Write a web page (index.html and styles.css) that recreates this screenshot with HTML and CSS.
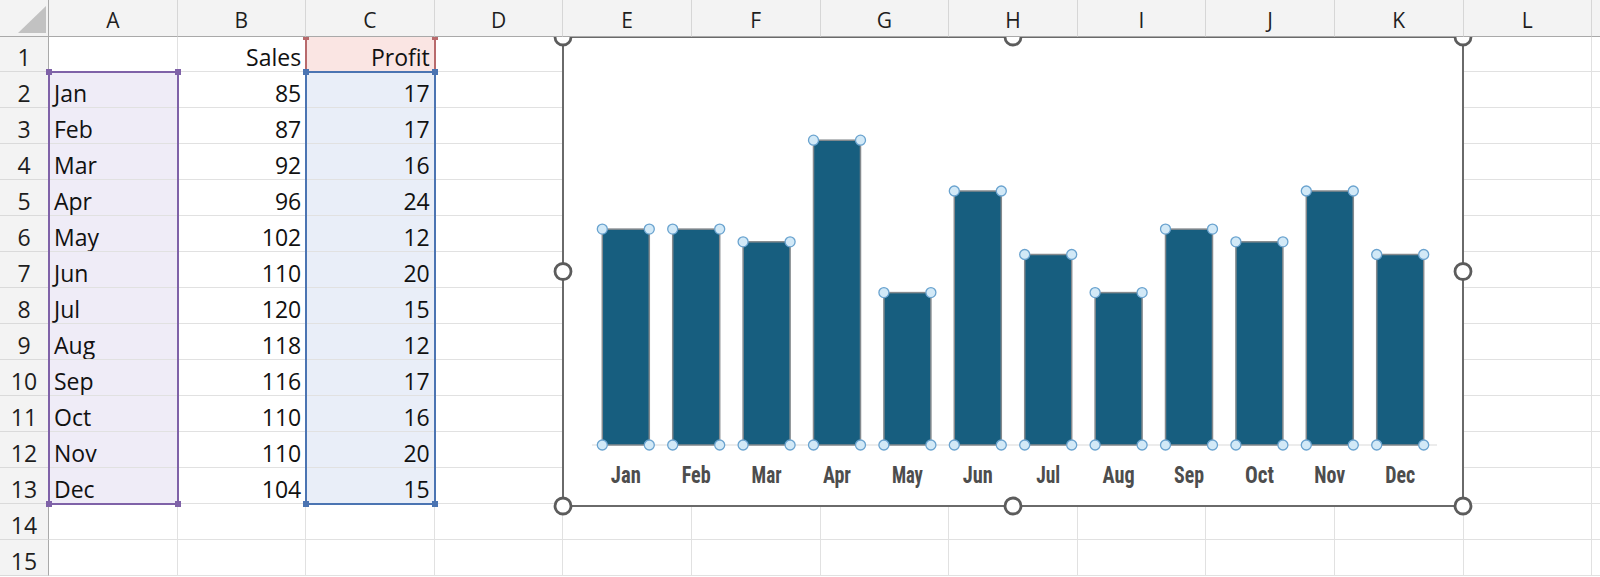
FILE: index.html
```html
<!DOCTYPE html>
<html>
<head>
<meta charset="utf-8">
<link rel="stylesheet" href="styles.css">
</head>
<body>
<div class="wrap">
  <div class="grid cells">
    <div class="ch corner"><div class="tri"></div></div><div class="ch">A</div><div class="ch">B</div><div class="ch">C</div><div class="ch">D</div><div class="ch">E</div><div class="ch">F</div><div class="ch">G</div><div class="ch">H</div><div class="ch">I</div><div class="ch">J</div><div class="ch">K</div><div class="ch">L</div><div class="ch"></div>

    <div class="rh">1</div><div class="c"></div><div class="c r">Sales</div><div class="c r sc1">Profit</div><div class="c"></div><div class="c"></div><div class="c"></div><div class="c"></div><div class="c"></div><div class="c"></div><div class="c"></div><div class="c"></div><div class="c"></div><div class="c"></div>
    <div class="rh">2</div><div class="c sa">Jan</div><div class="c r">85</div><div class="c r sc">17</div><div class="c"></div><div class="c"></div><div class="c"></div><div class="c"></div><div class="c"></div><div class="c"></div><div class="c"></div><div class="c"></div><div class="c"></div><div class="c"></div>
    <div class="rh">3</div><div class="c sa">Feb</div><div class="c r">87</div><div class="c r sc">17</div><div class="c"></div><div class="c"></div><div class="c"></div><div class="c"></div><div class="c"></div><div class="c"></div><div class="c"></div><div class="c"></div><div class="c"></div><div class="c"></div>
    <div class="rh">4</div><div class="c sa">Mar</div><div class="c r">92</div><div class="c r sc">16</div><div class="c"></div><div class="c"></div><div class="c"></div><div class="c"></div><div class="c"></div><div class="c"></div><div class="c"></div><div class="c"></div><div class="c"></div><div class="c"></div>
    <div class="rh">5</div><div class="c sa">Apr</div><div class="c r">96</div><div class="c r sc">24</div><div class="c"></div><div class="c"></div><div class="c"></div><div class="c"></div><div class="c"></div><div class="c"></div><div class="c"></div><div class="c"></div><div class="c"></div><div class="c"></div>
    <div class="rh">6</div><div class="c sa">May</div><div class="c r">102</div><div class="c r sc">12</div><div class="c"></div><div class="c"></div><div class="c"></div><div class="c"></div><div class="c"></div><div class="c"></div><div class="c"></div><div class="c"></div><div class="c"></div><div class="c"></div>
    <div class="rh">7</div><div class="c sa">Jun</div><div class="c r">110</div><div class="c r sc">20</div><div class="c"></div><div class="c"></div><div class="c"></div><div class="c"></div><div class="c"></div><div class="c"></div><div class="c"></div><div class="c"></div><div class="c"></div><div class="c"></div>
    <div class="rh">8</div><div class="c sa">Jul</div><div class="c r">120</div><div class="c r sc">15</div><div class="c"></div><div class="c"></div><div class="c"></div><div class="c"></div><div class="c"></div><div class="c"></div><div class="c"></div><div class="c"></div><div class="c"></div><div class="c"></div>
    <div class="rh">9</div><div class="c sa">Aug</div><div class="c r">118</div><div class="c r sc">12</div><div class="c"></div><div class="c"></div><div class="c"></div><div class="c"></div><div class="c"></div><div class="c"></div><div class="c"></div><div class="c"></div><div class="c"></div><div class="c"></div>
    <div class="rh">10</div><div class="c sa">Sep</div><div class="c r">116</div><div class="c r sc">17</div><div class="c"></div><div class="c"></div><div class="c"></div><div class="c"></div><div class="c"></div><div class="c"></div><div class="c"></div><div class="c"></div><div class="c"></div><div class="c"></div>
    <div class="rh">11</div><div class="c sa">Oct</div><div class="c r">110</div><div class="c r sc">16</div><div class="c"></div><div class="c"></div><div class="c"></div><div class="c"></div><div class="c"></div><div class="c"></div><div class="c"></div><div class="c"></div><div class="c"></div><div class="c"></div>
    <div class="rh">12</div><div class="c sa">Nov</div><div class="c r">110</div><div class="c r sc">20</div><div class="c"></div><div class="c"></div><div class="c"></div><div class="c"></div><div class="c"></div><div class="c"></div><div class="c"></div><div class="c"></div><div class="c"></div><div class="c"></div>
    <div class="rh">13</div><div class="c sa">Dec</div><div class="c r">104</div><div class="c r sc">15</div><div class="c"></div><div class="c"></div><div class="c"></div><div class="c"></div><div class="c"></div><div class="c"></div><div class="c"></div><div class="c"></div><div class="c"></div><div class="c"></div>
    <div class="rh">14</div><div class="c"></div><div class="c"></div><div class="c"></div><div class="c"></div><div class="c"></div><div class="c"></div><div class="c"></div><div class="c"></div><div class="c"></div><div class="c"></div><div class="c"></div><div class="c"></div><div class="c"></div>
    <div class="rh">15</div><div class="c"></div><div class="c"></div><div class="c"></div><div class="c"></div><div class="c"></div><div class="c"></div><div class="c"></div><div class="c"></div><div class="c"></div><div class="c"></div><div class="c"></div><div class="c"></div><div class="c"></div>
  </div>

  <div class="grid overlay">
    <div class="sel selA"><span class="h tl"></span><span class="h tr"></span><span class="h bl"></span><span class="h br"></span></div>
    <div class="sel selC1"><span class="t tl"></span><span class="t tr"></span></div>
    <div class="sel selC"><span class="h tl"></span><span class="h tr"></span><span class="h bl"></span><span class="h br"></span></div>
    <div class="chart">
      <svg width="900" height="469" viewBox="0 0 900 469">
        <rect x="0" y="0" width="900" height="469" fill="#ffffff" stroke="#6a6a6a" stroke-width="2"/>
        <line x1="29" y1="408" x2="874" y2="408" stroke="#d9d9d9" stroke-width="1"/>
        <g class="bars">
          <rect x="39.3" y="192.1" width="47" height="215.9"/>
          <rect x="109.7" y="192.1" width="47" height="215.9"/>
          <rect x="180.1" y="204.8" width="47" height="203.2"/>
          <rect x="250.5" y="103.2" width="47" height="304.8"/>
          <rect x="320.9" y="255.6" width="47" height="152.4"/>
          <rect x="391.3" y="154" width="47" height="254"/>
          <rect x="461.7" y="217.5" width="47" height="190.5"/>
          <rect x="532.1" y="255.6" width="47" height="152.4"/>
          <rect x="602.5" y="192.1" width="47" height="215.9"/>
          <rect x="672.9" y="204.8" width="47" height="203.2"/>
          <rect x="743.3" y="154" width="47" height="254"/>
          <rect x="813.7" y="217.5" width="47" height="190.5"/>
        </g>
        <g class="pts">
          <circle cx="39.3" cy="192.1" r="5"/><circle cx="86.3" cy="192.1" r="5"/><circle cx="39.3" cy="408" r="5"/><circle cx="86.3" cy="408" r="5"/>
          <circle cx="109.7" cy="192.1" r="5"/><circle cx="156.7" cy="192.1" r="5"/><circle cx="109.7" cy="408" r="5"/><circle cx="156.7" cy="408" r="5"/>
          <circle cx="180.1" cy="204.8" r="5"/><circle cx="227.1" cy="204.8" r="5"/><circle cx="180.1" cy="408" r="5"/><circle cx="227.1" cy="408" r="5"/>
          <circle cx="250.5" cy="103.2" r="5"/><circle cx="297.5" cy="103.2" r="5"/><circle cx="250.5" cy="408" r="5"/><circle cx="297.5" cy="408" r="5"/>
          <circle cx="320.9" cy="255.6" r="5"/><circle cx="367.9" cy="255.6" r="5"/><circle cx="320.9" cy="408" r="5"/><circle cx="367.9" cy="408" r="5"/>
          <circle cx="391.3" cy="154" r="5"/><circle cx="438.3" cy="154" r="5"/><circle cx="391.3" cy="408" r="5"/><circle cx="438.3" cy="408" r="5"/>
          <circle cx="461.7" cy="217.5" r="5"/><circle cx="508.7" cy="217.5" r="5"/><circle cx="461.7" cy="408" r="5"/><circle cx="508.7" cy="408" r="5"/>
          <circle cx="532.1" cy="255.6" r="5"/><circle cx="579.1" cy="255.6" r="5"/><circle cx="532.1" cy="408" r="5"/><circle cx="579.1" cy="408" r="5"/>
          <circle cx="602.5" cy="192.1" r="5"/><circle cx="649.5" cy="192.1" r="5"/><circle cx="602.5" cy="408" r="5"/><circle cx="649.5" cy="408" r="5"/>
          <circle cx="672.9" cy="204.8" r="5"/><circle cx="719.9" cy="204.8" r="5"/><circle cx="672.9" cy="408" r="5"/><circle cx="719.9" cy="408" r="5"/>
          <circle cx="743.3" cy="154" r="5"/><circle cx="790.3" cy="154" r="5"/><circle cx="743.3" cy="408" r="5"/><circle cx="790.3" cy="408" r="5"/>
          <circle cx="813.7" cy="217.5" r="5"/><circle cx="860.7" cy="217.5" r="5"/><circle cx="813.7" cy="408" r="5"/><circle cx="860.7" cy="408" r="5"/>
        </g>
        <g class="cats">
          <text x="62.8" y="446" textLength="30" lengthAdjust="spacingAndGlyphs">Jan</text>
          <text x="133.2" y="446" textLength="29" lengthAdjust="spacingAndGlyphs">Feb</text>
          <text x="203.6" y="446" textLength="30" lengthAdjust="spacingAndGlyphs">Mar</text>
          <text x="274" y="446" textLength="28" lengthAdjust="spacingAndGlyphs">Apr</text>
          <text x="344.4" y="446" textLength="31" lengthAdjust="spacingAndGlyphs">May</text>
          <text x="414.8" y="446" textLength="30" lengthAdjust="spacingAndGlyphs">Jun</text>
          <text x="485.2" y="446" textLength="24" lengthAdjust="spacingAndGlyphs">Jul</text>
          <text x="555.6" y="446" textLength="32" lengthAdjust="spacingAndGlyphs">Aug</text>
          <text x="626" y="446" textLength="30" lengthAdjust="spacingAndGlyphs">Sep</text>
          <text x="696.4" y="446" textLength="29" lengthAdjust="spacingAndGlyphs">Oct</text>
          <text x="766.8" y="446" textLength="31" lengthAdjust="spacingAndGlyphs">Nov</text>
          <text x="837.2" y="446" textLength="30" lengthAdjust="spacingAndGlyphs">Dec</text>
        </g>
        <g class="frame-h">
          <circle cx="0" cy="0" r="8"/><circle cx="450" cy="0" r="8"/><circle cx="900" cy="0" r="8"/>
          <circle cx="0" cy="234.5" r="8"/><circle cx="900" cy="234.5" r="8"/>
          <circle cx="0" cy="469" r="8"/><circle cx="450" cy="469" r="8"/><circle cx="900" cy="469" r="8"/>
        </g>
      </svg>
    </div>
  </div>
</div>
</body>
</html>
```

FILE: styles.css
```css
* { box-sizing: border-box; }
html, body { margin: 0; padding: 0; background: #ffffff; }
body {
  width: 1600px;
  height: 577px;
  overflow: hidden;
  font-family: "Open Sans", "Noto Sans", sans-serif;
}
.wrap { position: relative; width: 1600px; height: 577px; }
.grid {
  display: grid;
  grid-template-columns: 49px repeat(12, 128.6px) 1fr;
  grid-template-rows: 37px 35px repeat(14, 36px);
}

/* column headers */
.ch {
  position: relative;
  z-index: 3;
  background: #f3f3f3;
  border-right: 1px solid #d6d6d6;
  border-bottom: 1px solid #a9a9a9;
  display: flex;
  align-items: center;
  justify-content: center;
  padding-top: 4px;
  font-size: 21px;
  color: #1e1e1e;
}
.corner {
  border-right: 1px solid #a9a9a9;
  justify-content: flex-end;
  align-items: flex-end;
  padding: 0 2px 3px 0;
}
.tri {
  width: 28px;
  height: 27px;
  background: #c2c2c2;
  clip-path: polygon(100% 0, 100% 100%, 0 100%);
}

/* row headers */
.rh {
  background: #f3f3f3;
  border-right: 1px solid #a9a9a9;
  border-bottom: 1px solid #dadada;
  display: flex;
  align-items: flex-end;
  justify-content: center;
  font-size: 23px;
  line-height: 26px;
  padding-bottom: 1px;
  color: #1e1e1e;
}

/* cells */
.c {
  border-right: 1px solid #e1e1e1;
  border-bottom: 1px solid #e1e1e1;
  display: flex;
  align-items: flex-end;
  font-size: 23px;
  line-height: 26px;
  padding: 0 4px 1px 5px;
  color: #111111;
  white-space: nowrap;
  overflow: hidden;
}
.c.r { justify-content: flex-end; }
.sa { background: #efecf7; }
.sc { background: #e9eef8; }
.sc1 { background: #fae5e3; }

/* overlay layer */
.overlay {
  position: absolute;
  inset: 0;
  z-index: 1;
  pointer-events: none;
}
.sel { position: relative; }
.selA {
  grid-column: 2;
  grid-row: 3 / 15;
  margin: -1px;
  border: 2px solid #7f62a8;
}
.selC {
  grid-column: 4;
  grid-row: 3 / 15;
  margin: -1px;
  border: 2px solid #4b74b2;
}
.selC1 {
  grid-column: 4;
  grid-row: 2;
  margin: 0 -1px -1px -1px;
  border-left: 2px solid #b86a6c;
  border-right: 2px solid #b86a6c;
}
.h {
  position: absolute;
  width: 6px;
  height: 6px;
}
.selA .h { background: #7f62a8; }
.selC .h { background: #4b74b2; }
.tl { left: -4px; top: -4px; }
.tr { right: -4px; top: -4px; }
.bl { left: -4px; bottom: -4px; }
.br { right: -4px; bottom: -4px; }
.t {
  position: absolute;
  width: 6px;
  height: 3px;
  top: 0;
  background: #b86a6c;
}
.t.tl { left: -4px; }
.t.tr { right: -4px; left: auto; }

/* chart */
.chart {
  grid-column: 6 / 13;
  grid-row: 2 / 15;
  margin-bottom: -2px;
  position: relative;
}
.chart svg { display: block; overflow: visible; }
.bars rect { fill: #175e7f; stroke: #858a8e; stroke-width: 1.5; }
.pts circle { fill: #d2e9f7; stroke: #6aa3cf; stroke-width: 1.3; }
.cats text {
  font-family: "Roboto Condensed", "DejaVu Sans Condensed", "Liberation Sans Narrow", "Roboto", sans-serif;
  font-weight: 700;
  font-size: 23px;
  fill: #4d4d4d;
  text-anchor: middle;
}
.frame-h circle { fill: #ffffff; stroke: #5c5c5c; stroke-width: 2.8; }
```
